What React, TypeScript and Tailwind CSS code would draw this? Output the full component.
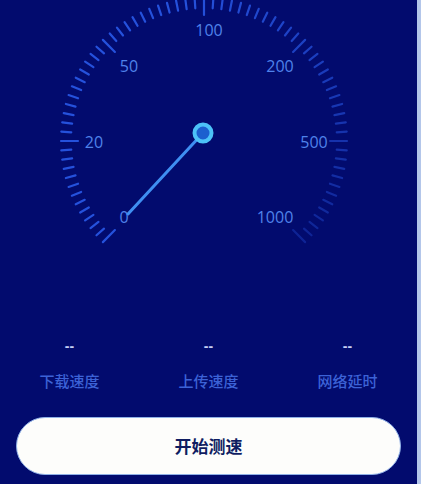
import React from "react";

const CX = 204;
const CY = 141;
const R_OUT = 143;

function Gauge() {
  const ticks = [];
  for (let i = 0; i <= 72; i++) {
    const deg = 225 - i * 3.75;
    const rad = (deg * Math.PI) / 180;
    const major = i % 12 === 0;
    const len = major ? 17 : 10;
    const x1 = CX + R_OUT * Math.cos(rad);
    const y1 = CY - R_OUT * Math.sin(rad);
    const x2 = CX + (R_OUT - len) * Math.cos(rad);
    const y2 = CY - (R_OUT - len) * Math.sin(rad);
    const op = i <= 34 ? 0.85 : 0.85 - ((i - 34) / 38) * 0.55;
    ticks.push(
      <line
        key={i}
        x1={x1}
        y1={y1}
        x2={x2}
        y2={y2}
        stroke="#2c5ef0"
        strokeOpacity={op}
        strokeWidth={2.2}
        strokeLinecap="round"
      />
    );
  }
  const labels: [string, number, number][] = [
    ["0", 124, 217],
    ["20", 94, 142],
    ["50", 129, 66],
    ["100", 209, 30],
    ["200", 280, 66],
    ["500", 314, 142],
    ["1000", 275, 217],
  ];
  return (
    <svg width={416} height={334} viewBox="0 0 416 334" className="block">
      {ticks}
      {labels.map(([t, x, y]) => (
        <text
          key={t}
          x={x}
          y={y}
          textAnchor="middle"
          dominantBaseline="central"
          fill="#4f82ea"
          fontSize={16}
          fontFamily="'Open Sans', sans-serif"
        >
          {t}
        </text>
      ))}
      <line x1={203} y1={133} x2={128} y2={214} stroke="#3f8ff2" strokeWidth={3} strokeLinecap="round" />
      <circle cx={203} cy={133} r={8.5} fill="#1c5fcf" stroke="#4cc2f8" strokeWidth={4} />
    </svg>
  );
}

export default function App() {
  const stats = ["下载速度", "上传速度", "网络延时"];
  return (
    <div className="flex w-[421px] h-[484px] overflow-hidden">
      <div className="w-[417px] h-full bg-[#020b6e] flex flex-col">
        <Gauge />
        <div className="grid grid-cols-3">
          {stats.map((s) => (
            <div key={s} className="flex flex-col items-center">
              <div className="h-[24px] leading-[24px] text-[14px] font-bold text-[#c6cff5] font-['Liberation_Sans',sans-serif]">
                --
              </div>
              <div className="mt-[11px] h-[24px] leading-[24px] text-[15px] font-medium text-[#3c62d6] font-['Noto_Sans_CJK_SC',sans-serif]">
                {s}
              </div>
            </div>
          ))}
        </div>
        <div className="px-[16px] mt-[24px]">
          <div className="h-[58px] rounded-full bg-[#fdfdfb] border border-[#8fb0e6] flex items-center justify-center">
            <span className="text-[17px] font-bold text-[#0f1d62] font-['Noto_Sans_CJK_SC',sans-serif]">
              开始测速
            </span>
          </div>
        </div>
      </div>
      <div className="w-[4px] h-full bg-[#b3c6ea]" />
    </div>
  );
}
